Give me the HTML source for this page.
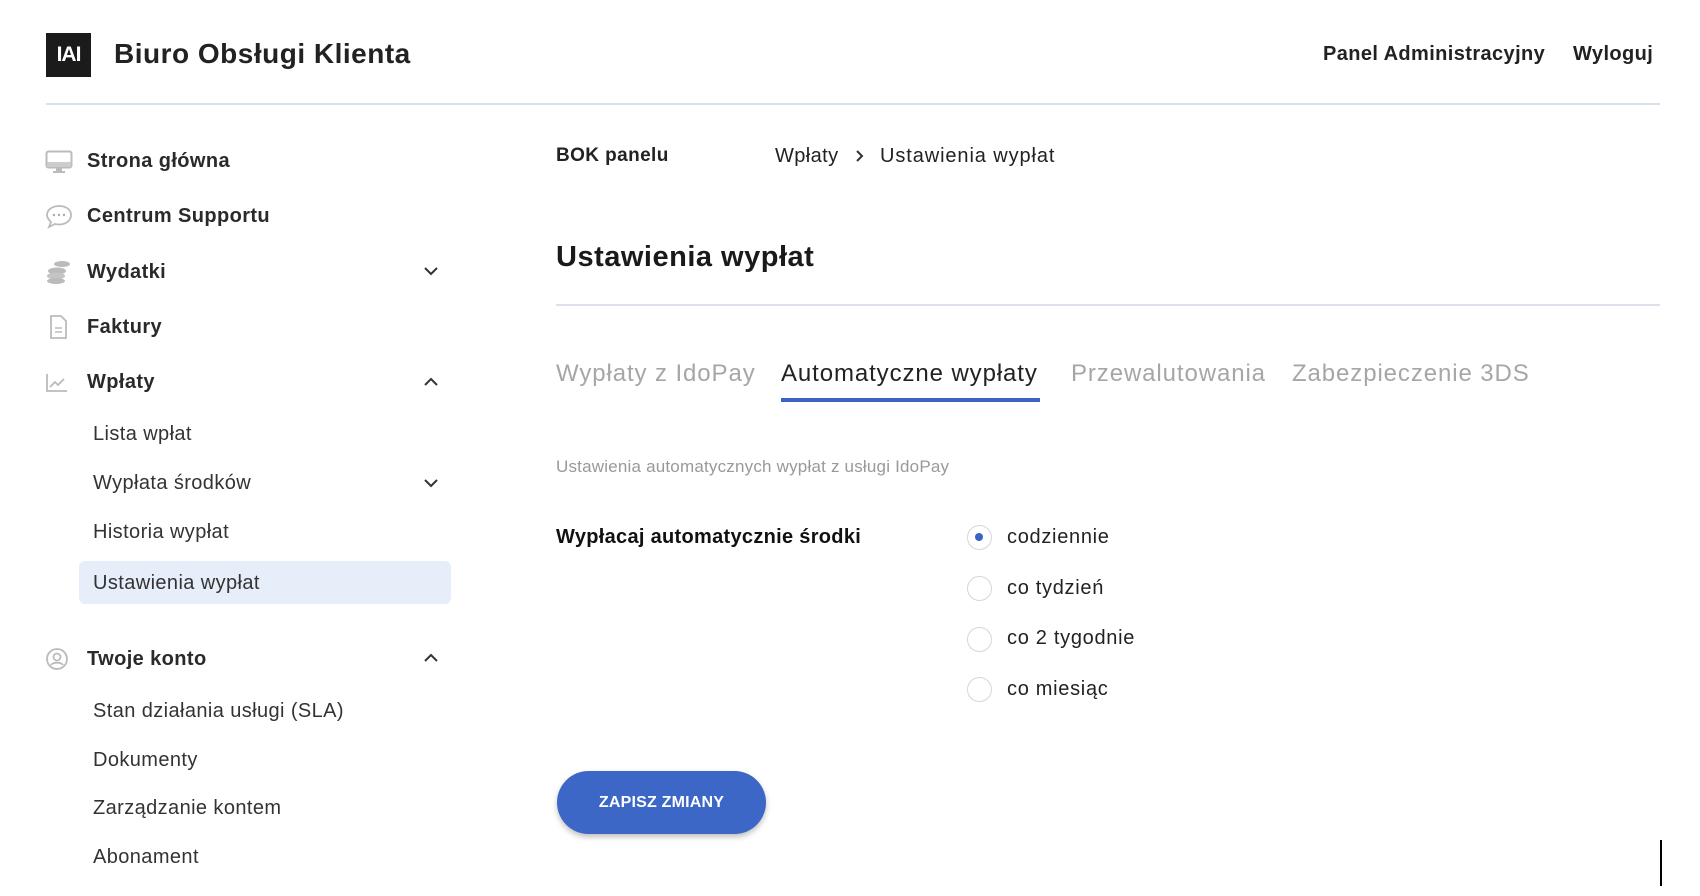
<!DOCTYPE html>
<html><head><meta charset="utf-8"><style>
*{margin:0;padding:0;box-sizing:border-box}
body{width:1700px;height:896px;background:#fff;font-family:"Liberation Sans",sans-serif;color:#222;position:relative;overflow:hidden;letter-spacing:0.4px}
.a{position:absolute;white-space:nowrap}
.logo{left:46px;top:33px;width:45px;height:44px;background:#1b1b1b;color:#fff;font-weight:bold;font-size:21px;text-align:center;line-height:44px;letter-spacing:-1px}
.b{font-weight:bold}
.side{font-size:20px;font-weight:bold;color:#2a2a2a;left:87px}
.sub{font-size:20px;color:#333;left:93px}
.ic{position:absolute;left:45px}
.chev{position:absolute;left:423px}
.tab{font-size:24px;color:#a6a6a6;top:360px;letter-spacing:0.9px}
.radio{position:absolute;left:967px;width:25px;height:25px;border:1.5px solid #d6d6d6;border-radius:50%}
.rl{font-size:20px;color:#222;left:1007px;letter-spacing:0.7px}
</style></head><body>
<div class="a logo">IAI</div>
<div class="a b" style="left:114px;top:38px;font-size:28px;color:#222;letter-spacing:0.5px">Biuro Obsługi Klienta</div>
<div class="a b" style="left:1323px;top:43px;font-size:20px;color:#222">Panel Administracyjny</div>
<div class="a b" style="left:1573px;top:43px;font-size:20px;color:#222">Wyloguj</div>
<div class="a" style="left:46px;top:103px;width:1614px;height:2px;background:#d8e0ea"></div>

<svg class="ic" style="top:150px" width="28" height="24" viewBox="0 0 28 24"><rect x="1.5" y="1.5" width="25" height="16" rx="2" fill="none" stroke="#bbb" stroke-width="2"/><rect x="2" y="12" width="24" height="5" fill="#ccc"/><rect x="11" y="18" width="6" height="3" fill="#bbb"/><rect x="8" y="21" width="12" height="2" fill="#bbb"/></svg>
<div class="a side" style="top:150px">Strona główna</div>
<svg class="ic" style="top:204px" width="28" height="26" viewBox="0 0 28 26"><path d="M14 2C7 2 2 6 2 11c0 3 2 5 4 7l-2 5 6-3c1 .3 3 .5 4 .5 7 0 12-4 12-9.5S21 2 14 2z" fill="none" stroke="#bbb" stroke-width="1.8"/><circle cx="9" cy="11" r="1.2" fill="#aaa"/><circle cx="14" cy="11" r="1.2" fill="#aaa"/><circle cx="19" cy="11" r="1.2" fill="#aaa"/></svg>
<div class="a side" style="top:205px">Centrum Supportu</div>
<svg class="ic" style="top:259px" width="28" height="26" viewBox="0 0 28 26"><ellipse cx="17" cy="5" rx="8" ry="3" fill="#bbb"/><ellipse cx="12" cy="12" rx="9" ry="3.5" fill="#bbb"/><ellipse cx="11" cy="17" rx="9" ry="3.5" fill="#c4c4c4"/><ellipse cx="11" cy="22" rx="9" ry="3" fill="#bbb"/></svg>
<div class="a side" style="top:261px">Wydatki</div>
<svg class="ic" style="top:314px" width="28" height="26" viewBox="0 0 28 26"><path d="M6 2h10l5 5v17H6z" fill="none" stroke="#bbb" stroke-width="1.8"/><path d="M10 14h7M10 18h7" stroke="#bbb" stroke-width="1.5"/></svg>
<div class="a side" style="top:316px">Faktury</div>
<svg class="ic" style="top:372px" width="28" height="22" viewBox="0 0 28 22"><path d="M2 2v17h20" fill="none" stroke="#bbb" stroke-width="1.8"/><path d="M5 15l5-5 3 3 6-6" fill="none" stroke="#bbb" stroke-width="1.8"/></svg>
<div class="a side" style="top:371px">Wpłaty</div>
<svg class="chev" style="top:266px" width="16" height="10" viewBox="0 0 16 10"><path d="M2 2l6 6 6-6" fill="none" stroke="#333" stroke-width="2"/></svg>
<svg class="chev" style="top:377px" width="16" height="10" viewBox="0 0 16 10"><path d="M2 8l6-6 6 6" fill="none" stroke="#333" stroke-width="2"/></svg>

<div class="a sub" style="top:423px">Lista wpłat</div>
<div class="a sub" style="top:472px">Wypłata środków</div>
<svg class="chev" style="top:478px" width="16" height="10" viewBox="0 0 16 10"><path d="M2 2l6 6 6-6" fill="none" stroke="#333" stroke-width="2"/></svg>
<div class="a sub" style="top:521px">Historia wypłat</div>
<div class="a" style="left:79px;top:561px;width:372px;height:43px;background:#e6eef9;border-radius:6px"></div>
<div class="a sub" style="top:572px">Ustawienia wypłat</div>

<svg class="ic" style="top:647px" width="26" height="26" viewBox="0 0 26 26"><circle cx="12" cy="12" r="10" fill="none" stroke="#bbb" stroke-width="1.8"/><circle cx="12" cy="10" r="3.5" fill="none" stroke="#bbb" stroke-width="1.8"/><path d="M6 18c2-3 10-3 12 0" fill="none" stroke="#bbb" stroke-width="1.8"/></svg>
<div class="a side" style="top:648px">Twoje konto</div>
<svg class="chev" style="top:653px" width="16" height="10" viewBox="0 0 16 10"><path d="M2 8l6-6 6 6" fill="none" stroke="#333" stroke-width="2"/></svg>
<div class="a sub" style="top:700px">Stan działania usługi (SLA)</div>
<div class="a sub" style="top:749px">Dokumenty</div>
<div class="a sub" style="top:797px">Zarządzanie kontem</div>
<div class="a sub" style="top:846px">Abonament</div>

<div class="a b" style="left:556px;top:145px;font-size:19px;color:#222">BOK panelu</div>
<div class="a" style="left:775px;top:145px;font-size:20px;color:#222">Wpłaty</div>
<svg class="a" style="left:855px;top:149px" width="10" height="14" viewBox="0 0 10 14"><path d="M2 2l5 5-5 5" fill="none" stroke="#333" stroke-width="2"/></svg>
<div class="a" style="left:880px;top:145px;font-size:20px;color:#222;letter-spacing:0.9px">Ustawienia wypłat</div>

<div class="a b" style="left:556px;top:241px;font-size:29px;color:#1a1a1a;letter-spacing:0.5px">Ustawienia wypłat</div>
<div class="a" style="left:556px;top:304px;width:1104px;height:2px;background:#dde2ea"></div>

<div class="a tab" style="left:556px">Wypłaty z IdoPay</div>
<div class="a tab" style="left:781px;color:#222">Automatyczne wypłaty</div>
<div class="a tab" style="left:1071px">Przewalutowania</div>
<div class="a tab" style="left:1292px">Zabezpieczenie 3DS</div>
<div class="a" style="left:781px;top:398px;width:259px;height:4px;background:#3a64c4"></div>

<div class="a" style="left:556px;top:457px;font-size:17px;color:#999;letter-spacing:0.2px">Ustawienia automatycznych wypłat z usługi IdoPay</div>

<div class="a b" style="left:556px;top:526px;font-size:20px;color:#111;letter-spacing:0.3px">Wypłacaj automatycznie środki</div>
<div class="radio" style="top:525px"><div style="position:absolute;left:7px;top:7px;width:8px;height:8px;border-radius:50%;background:#3a64c4"></div></div>
<div class="a rl" style="top:526px">codziennie</div>
<div class="radio" style="top:576px"></div>
<div class="a rl" style="top:577px">co tydzień</div>
<div class="radio" style="top:627px"></div>
<div class="a rl" style="top:627px">co 2 tygodnie</div>
<div class="radio" style="top:677px"></div>
<div class="a rl" style="top:678px">co miesiąc</div>

<div class="a b" style="left:557px;top:771px;width:209px;height:63px;border-radius:32px;background:#3c67c6;color:#fff;font-size:16px;text-align:center;line-height:63px;box-shadow:0 3px 6px rgba(0,0,0,.25);letter-spacing:0.2px">ZAPISZ ZMIANY</div>

<div class="a" style="left:1660px;top:840px;width:2px;height:46px;background:#000"></div>
</body></html>
